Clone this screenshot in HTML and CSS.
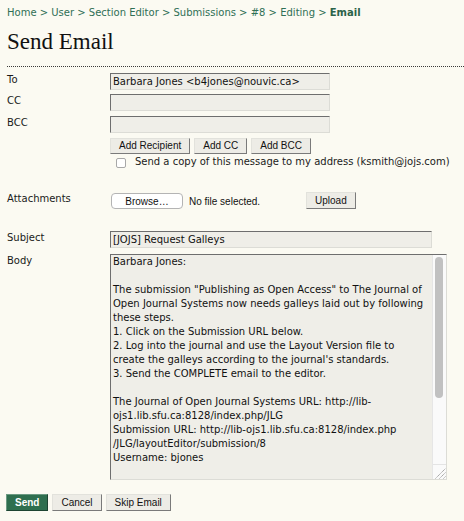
FILE: index.html
```html
<!DOCTYPE html>
<html lang="en">
<head>
<meta charset="utf-8">
<title>Send Email</title>
<link rel="stylesheet" href="styles.css">
</head>
<body>
<div class="page">
  <nav class="crumbs">
    <a href="#">Home</a> &gt; <a href="#">User</a> &gt; <a href="#">Section Editor</a> &gt; <a href="#">Submissions</a> &gt; <a href="#">#8</a> &gt; <a href="#">Editing</a> &gt; <a href="#" class="current">Email</a>
  </nav>
  <h1 class="title">Send Email</h1>
  <div class="separator"></div>
  <form class="email-form">
    <div class="row row-to">
      <label class="label">To</label>
      <input class="text-input short" type="text" value="Barbara Jones &lt;b4jones@nouvic.ca&gt;">
    </div>
    <div class="row row-cc">
      <label class="label">CC</label>
      <input class="text-input short" type="text" value="">
    </div>
    <div class="row row-bcc">
      <label class="label">BCC</label>
      <input class="text-input short" type="text" value="">
    </div>
    <div class="row row-add">
      <span class="label"></span>
      <div class="btn-group">
        <button type="button" class="btn small">Add Recipient</button>
        <button type="button" class="btn small">Add CC</button>
        <button type="button" class="btn small">Add BCC</button>
      </div>
    </div>
    <div class="row row-copy">
      <span class="label"></span>
      <label class="copy"><input type="checkbox" class="check">Send a copy of this message to my address (ksmith@jojs.com)</label>
    </div>
    <div class="row row-attach">
      <label class="label">Attachments</label>
      <div class="file-group">
        <button type="button" class="browse">Browse…</button>
        <span class="no-file">No file selected.</span>
      </div>
      <button type="button" class="btn upload">Upload</button>
    </div>
    <div class="row row-subject">
      <label class="label">Subject</label>
      <input class="text-input long" type="text" value="[JOJS] Request Galleys">
    </div>
    <div class="row row-body">
      <label class="label">Body</label>
      <div class="body-box">
        <textarea class="body-text" wrap="off">Barbara Jones:

The submission "Publishing as Open Access" to The Journal of
Open Journal Systems now needs galleys laid out by following
these steps.
1. Click on the Submission URL below.
2. Log into the journal and use the Layout Version file to
create the galleys according to the journal's standards.
3. Send the COMPLETE email to the editor.

The Journal of Open Journal Systems URL: http://lib-
ojs1.lib.sfu.ca:8128/index.php/JLG
Submission URL: http://lib-ojs1.lib.sfu.ca:8128/index.php
/JLG/layoutEditor/submission/8
Username: bjones

If you are unable to undertake this work at this time or
have any questions, please contact me. Thank you for your
contribution to this journal.

Kevin Smith
The Journal of Open Journal Systems
ksmith@jojs.com</textarea>
        <div class="scrollbar" aria-hidden="true">
          <div class="thumb"></div>
          <div class="track-rest"></div>
          <div class="grip">
            <svg width="13" height="14" viewBox="0 0 13 14">
              <path d="M2.5 13.5 L12.5 3.5 M6.5 13.5 L12.5 7.5 M10.5 13.5 L12.5 11.5" stroke="#9a9a9a" stroke-width="1" stroke-dasharray="1.2 0.6" fill="none"/>
            </svg>
          </div>
        </div>
      </div>
    </div>
    <div class="actions">
      <button type="button" class="btn send">Send</button>
      <button type="button" class="btn">Cancel</button>
      <button type="button" class="btn">Skip Email</button>
    </div>
  </form>
</div>
</body>
</html>
```

FILE: styles.css
```css
html, body {
  margin: 0;
  background: #fbfaf2;
}

body {
  font-family: "DejaVu Sans", Verdana, sans-serif;
  font-size: 10px;
  color: #222;
}

.page {
  padding-left: 7px;
}

.crumbs {
  padding-top: 6px;
  height: 14px;
  line-height: 14px;
  color: #2f6f55;
}

.crumbs a {
  color: #2f6f55;
  text-decoration: none;
}

.crumbs .current {
  font-weight: bold;
  color: #2b6249;
}

.title {
  font-family: "Liberation Serif", "Times New Roman", serif;
  font-weight: normal;
  font-size: 23px;
  line-height: 28px;
  margin: 8px 0 10px;
  color: #111;
}

.separator {
  border-top: 1px dotted #3a3a3a;
}

.email-form {
  display: flex;
  flex-direction: column;
}

.row {
  display: flex;
  align-items: flex-start;
}

.label {
  width: 103px;
  flex: none;
  line-height: 14px;
  color: #1a1a1a;
}

.row-to { margin-top: 6px; }
.row-cc { margin-top: 4px; }
.row-bcc { margin-top: 5px; }
.row-add { margin-top: 5px; }
.row-copy { margin-top: 1px; }
.row-attach { margin-top: 23px; }
.row-subject { margin-top: 22px; }
.row-body { margin-top: 6px; }

.text-input {
  box-sizing: border-box;
  height: 17px;
  margin: 0;
  padding: 0 2px;
  border: 1px solid;
  border-color: #6e6e6e #dcdcd6 #dcdcd6 #6e6e6e;
  background: #efeee8;
  font-family: "DejaVu Sans", Verdana, sans-serif;
  font-size: 10px;
  color: #111;
  outline: none;
}

.short { width: 220px; }
.long { width: 322px; }

.btn-group {
  display: flex;
  gap: 4px;
}

.btn {
  box-sizing: border-box;
  height: 17px;
  margin: 0;
  padding: 0 8px;
  border: 1px solid;
  border-color: #e2e2dc #7a7a7a #7a7a7a #e2e2dc;
  background: #edece6;
  font-family: "Liberation Sans", Arial, sans-serif;
  font-size: 10px;
  line-height: 14px;
  color: #111;
}

.btn.small {
  height: 16px;
}

.copy {
  display: flex;
  align-items: flex-start;
  line-height: 14px;
  color: #1a1a1a;
}

.check {
  appearance: none;
  -webkit-appearance: none;
  box-sizing: border-box;
  width: 10px;
  height: 10px;
  margin: 3px 9px 0 6px;
  border: 1px solid #a8a8a8;
  border-radius: 2px;
  background: #fff;
}

.file-group {
  display: flex;
  align-items: center;
  gap: 6px;
  width: 196px;
}

.browse {
  box-sizing: border-box;
  width: 72px;
  height: 16px;
  margin: 1px 0 0 1px;
  padding: 0;
  border: 1px solid #b4b4b4;
  border-radius: 4px;
  background: #fff;
  font-family: "Liberation Sans", Arial, sans-serif;
  font-size: 10px;
  color: #111;
}

.no-file {
  font-family: "Liberation Sans", Arial, sans-serif;
  font-size: 10px;
  color: #111;
  margin-top: 1px;
}

.upload {
  height: 17px;
}

.body-box {
  box-sizing: border-box;
  display: flex;
  width: 337px;
  height: 226px;
  border: 1px solid;
  border-color: #6e6e6e #dcdcd6 #dcdcd6 #6e6e6e;
  background: #efeee8;
}

.body-text {
  flex: 1;
  min-width: 0;
  height: 100%;
  box-sizing: border-box;
  margin: 0;
  padding: 0 0 0 2px;
  border: none;
  background: transparent;
  font-family: "DejaVu Sans", Verdana, sans-serif;
  font-size: 10px;
  line-height: 14px;
  color: #111;
  overflow: hidden;
  white-space: pre;
  resize: none;
  outline: none;
}

.scrollbar {
  flex: none;
  box-sizing: border-box;
  width: 14px;
  display: flex;
  flex-direction: column;
  background: #fafafa;
  border-left: 1px solid #e6e6e6;
}

.thumb {
  height: 141px;
  margin: 2px 3px 0 2px;
  border-radius: 5px;
  background: #c1c1c1;
}

.track-rest {
  flex: 1;
}

.grip {
  height: 14px;
  border-top: 1px solid #e4e4e4;
  display: flex;
}

.actions {
  display: flex;
  gap: 4px;
  margin: 14px 0 0 -1px;
}

.btn.send {
  background: #2f6f4f;
  border-color: #6b9a82 #1d4432 #1d4432 #6b9a82;
  color: #fff;
  font-weight: bold;
}
```
